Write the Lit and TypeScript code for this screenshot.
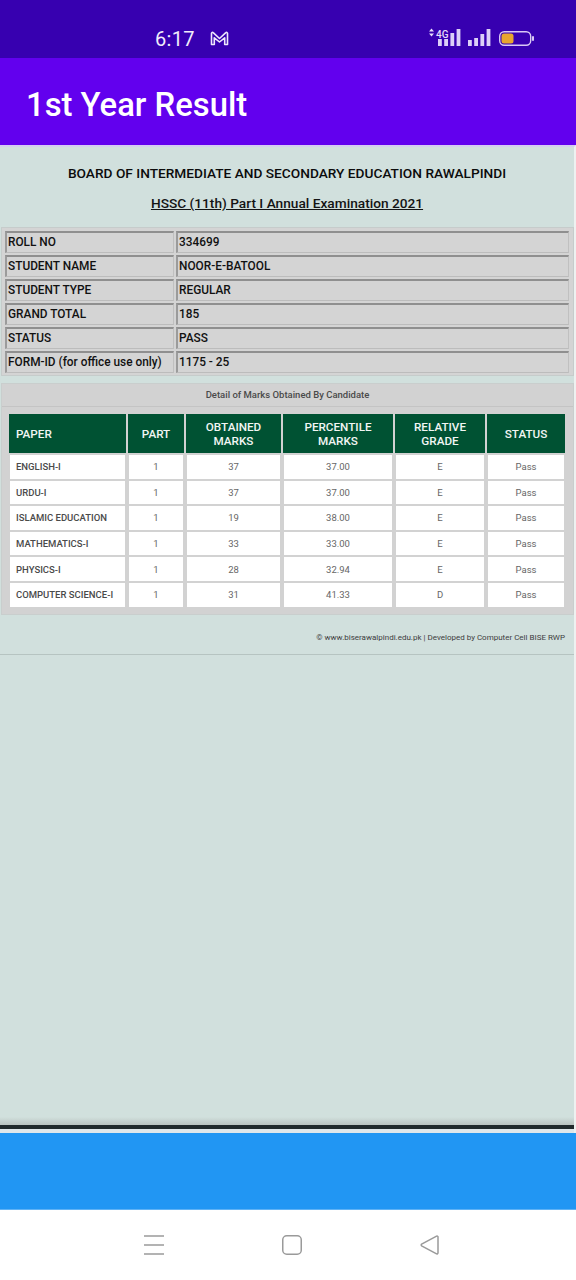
import { LitElement, html, css, svg } from "lit";
import { customElement } from "lit/decorators.js";

const INFO: [string, string][] = [
  ["ROLL NO", "334699"],
  ["STUDENT NAME", "NOOR-E-BATOOL"],
  ["STUDENT TYPE", "REGULAR"],
  ["GRAND TOTAL", "185"],
  ["STATUS", "PASS"],
  ["FORM-ID (for office use only)", "1175 - 25"],
];
const HEAD = ["PAPER", "PART", "OBTAINED MARKS", "PERCENTILE MARKS", "RELATIVE GRADE", "STATUS"];
const ROWS = [
  ["ENGLISH-I", "1", "37", "37.00", "E", "Pass"],
  ["URDU-I", "1", "37", "37.00", "E", "Pass"],
  ["ISLAMIC EDUCATION", "1", "19", "38.00", "E", "Pass"],
  ["MATHEMATICS-I", "1", "33", "33.00", "E", "Pass"],
  ["PHYSICS-I", "1", "28", "32.94", "E", "Pass"],
  ["COMPUTER SCIENCE-I", "1", "31", "41.33", "D", "Pass"],
];

@customElement("app-root")
export class AppRoot extends LitElement {
  static styles = css`
    :host { display: flex; flex-direction: column; width: 576px; height: 1280px; overflow: hidden; font-family: Roboto, "Liberation Sans", sans-serif; background: #fff; }
    .status { height: 58px; flex: none; background: #3700b0; color: #f1ecfb; display: flex; align-items: flex-end; box-sizing: border-box; padding: 0 0 6px 155px; }
    .time { font-size: 20px; line-height: 26px; letter-spacing: 0.3px; width: 55px; flex: none; }
    .gmail { margin-bottom: 6px; flex: none; }
    .sig { margin-left: 198px; margin-bottom: 4px; display: block; flex: none; }
    .appbar { height: 87px; flex: none; background: #6200ee; color: #fff; font-size: 32.8px; font-weight: 500; display: flex; align-items: center; padding: 7px 0 0 26px; box-sizing: border-box; }
    .web { height: 988px; flex: none; background: #d1e0dd; border-top: 2px solid #d5cdf0; border-right: 2px solid #eef1f0; box-sizing: border-box; display: flex; flex-direction: column; }
    .board { margin-top: 18px; text-align: center; font-size: 13.7px; line-height: 16px; font-weight: 500; color: #0c0c0c; }
    .exam { margin-top: 14px; text-align: center; font-size: 13.7px; line-height: 16px; font-weight: 500; color: #141414; text-decoration: underline; }
    .info { margin: 16px 0 0 1px; width: 573px; height: 149px; box-sizing: border-box; background: #d4d4d4; border: 1px solid #c6cccb; padding: 3px 3px 0 3px; display: grid; grid-template-columns: 169px 393px; column-gap: 2px; row-gap: 2px; grid-auto-rows: 22px; }
    .ic { background: #d4d4d4; border: 1px solid #a9a9a9; border-top: 2px solid #8f8f8f; border-left: 2px solid #9b9b9b; border-right-color: #c0c0c0; border-bottom-color: #bcbcbc; box-sizing: border-box; font-size: 11.85px; line-height: 19px; font-weight: 500; color: #111; padding-left: 1px; white-space: nowrap; }
    .panel { margin: 7px 0 0 1px; width: 573px; height: 232px; box-sizing: border-box; background: #d2d2d2; border: 1px solid #c9cecd; padding: 0 7px; }
    .ptitle { height: 22px; margin: 0 -7px; border-bottom: 1px solid #c4c4c4; text-align: center; font-size: 9.5px; line-height: 21px; font-weight: 500; color: #4a4a4a; }
    .grid { margin-top: 7px; display: grid; grid-template-columns: 117px 56px 95px 110px 90px 78px; column-gap: 2px; grid-template-rows: 39px repeat(6, 23.6px); row-gap: 2px; }
    .h { background: #005233; color: #f2f6f4; font-size: 11.7px; line-height: 14px; font-weight: 500; display: flex; align-items: center; justify-content: center; text-align: center; padding: 0 14px; box-sizing: border-box; }
    .h.first { justify-content: flex-start; padding: 0 0 0 7px; }
    .c { background: #fff; margin: 0 1px; font-size: 9.5px; color: #666; display: flex; align-items: center; justify-content: center; }
    .c.first { justify-content: flex-start; padding-left: 6px; font-weight: 500; color: #4a4a4a; }
    .foot { margin-top: 18px; padding-right: 9px; text-align: right; font-size: 8px; line-height: 10px; color: #3d3d3d; }
    .rule { margin-top: 11px; width: 574px; height: 1px; flex: none; background: #b6c4c1; }
    .spacer { flex: 1; background: linear-gradient(to bottom, #d1e0dd 0, #d1e0dd calc(100% - 8px), #b9c2bf 100%); }
    .edge { height: 4px; flex: none; background: #20292b; }
    .edge2 { height: 4px; flex: none; background: #dfe7ea; }
    .blue { height: 77px; flex: none; background: #2196f3; border-bottom: 1px solid #5fb2f5; box-sizing: border-box; }
    .nav { flex: 1; background: #fff; display: flex; align-items: flex-start; padding: 25px 0 0 144px; }
    .nav svg { display: block; flex: none; }
    .n2, .n3 { margin-left: 118px; }
  `;

  private signal(x: number, hs: number[]) {
    return hs.map((h, i) => svg`<rect x=${x + i * 6.2} y=${21 - h} width="3.8" height=${h} fill="#dcd0f7"/>`);
  }

  render() {
    return html`
      <div class="status">
        <span class="time">6:17</span>
        <svg class="gmail" width="19" height="15" viewBox="0 0 19 15" fill="none" stroke="#eee8fb" stroke-width="1.6" stroke-linejoin="round">
          <path d="M1.5 13.5V2.3a1 1 0 0 1 1.7-.7L9.5 7.5l6.3-5.9a1 1 0 0 1 1.7.7v11.2h-2.8V6.8L9.5 11 4.3 6.8v6.7z"/>
        </svg>
        <svg class="sig" width="110" height="23" viewBox="0 0 110 23" fill="none">
          <path d="M2 6.5l2.5-3 2.5 3zM2 8.5l2.5 3 2.5-3z" fill="#e6dcfa"/>
          <text x="9" y="13" font-size="10" font-weight="500" fill="#e6dcfa" font-family="Roboto, sans-serif">4G</text>
          ${this.signal(11, [7, 7, 13, 17])}
          ${this.signal(41, [6, 8, 12, 17])}
          <rect x="72.7" y="6.7" width="31" height="13.6" rx="4.5" stroke="#d9c8f5" stroke-width="1.4"/>
          <rect x="74.5" y="8.5" width="12" height="10" rx="2.5" fill="#e8a52f"/>
          <rect x="105" y="11" width="2" height="5" rx="1" fill="#d9c8f5"/>
        </svg>
      </div>
      <div class="appbar">1st Year Result</div>
      <div class="web">
        <div class="board">BOARD OF INTERMEDIATE AND SECONDARY EDUCATION RAWALPINDI</div>
        <div class="exam">HSSC (11th) Part I Annual Examination 2021</div>
        <div class="info">
          ${INFO.map(([k, v]) => html`<div class="ic">${k}</div><div class="ic">${v}</div>`)}
        </div>
        <div class="panel">
          <div class="ptitle">Detail of Marks Obtained By Candidate</div>
          <div class="grid">
            ${HEAD.map((h, i) => html`<div class="h ${i === 0 ? "first" : ""}">${h}</div>`)}
            ${ROWS.map((r) => r.map((c, i) => html`<div class="c ${i === 0 ? "first" : ""}">${c}</div>`))}
          </div>
        </div>
        <div class="foot">© www.biserawalpindi.edu.pk | Developed by Computer Cell BISE RWP</div>
        <div class="rule"></div>
        <div class="spacer"></div>
        <div class="edge"></div>
        <div class="edge2"></div>
      </div>
      <div class="blue"></div>
      <div class="nav">
        <svg width="20" height="20" viewBox="0 0 20 20" stroke="#9a9a9a" stroke-width="1.5"><path d="M0 1h20M0 10h20M0 19h20"/></svg>
        <svg class="n2" width="20" height="20" viewBox="0 0 20 20" fill="none" stroke="#9a9a9a" stroke-width="1.5"><rect x="0.75" y="0.75" width="18.5" height="18.5" rx="4"/></svg>
        <svg class="n3" width="20" height="20" viewBox="0 0 20 20" fill="none" stroke="#9a9a9a" stroke-width="1.5" stroke-linejoin="round"><path d="M18 1.8a1 1 0 0 0-1.4-.6L1.6 9.2a1 1 0 0 0 0 1.6l15 8a1 1 0 0 0 1.4-.8z"/></svg>
      </div>
    `;
  }
}
